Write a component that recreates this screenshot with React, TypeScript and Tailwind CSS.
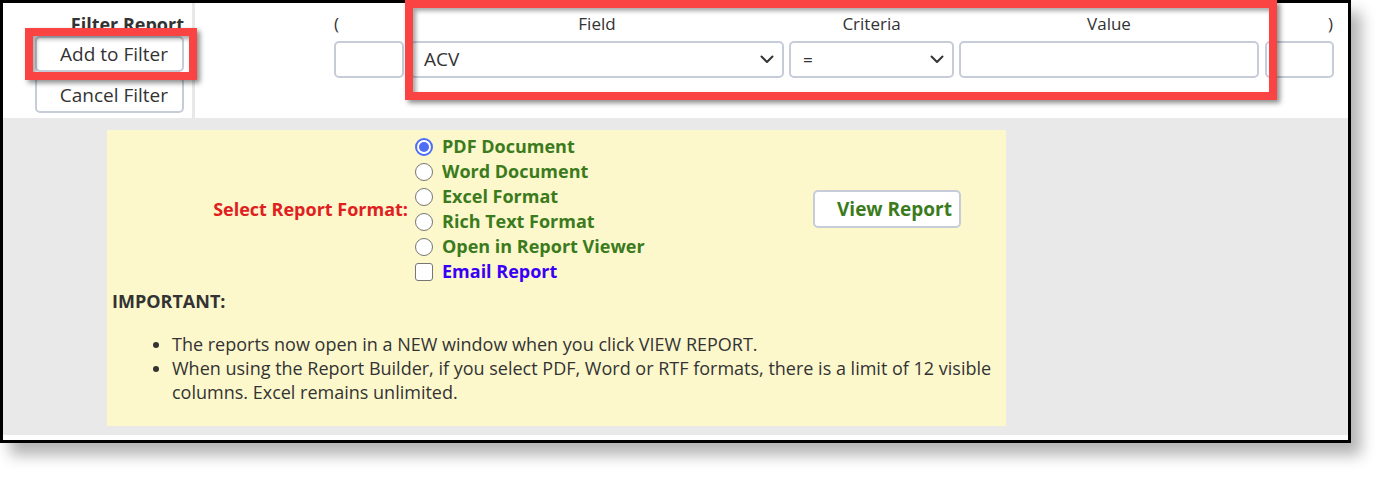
import React from "react";

function Chevron() {
  return (
    <svg width="14" height="9" viewBox="0 0 14 9" className="shrink-0">
      <path d="M1.5 1.5 L7 7 L12.5 1.5" fill="none" stroke="#333" strokeWidth="2" strokeLinecap="round" strokeLinejoin="round" />
    </svg>
  );
}

function Radio({ checked }: { checked?: boolean }) {
  if (checked) {
    return (
      <div className="w-[18px] h-[18px] rounded-full border-[2px] border-[#4d6df5] bg-white flex items-center justify-center shrink-0">
        <div className="w-[10px] h-[10px] rounded-full bg-[#4d6df5]" />
      </div>
    );
  }
  return <div className="w-[18px] h-[18px] rounded-full border-[1.5px] border-[#767676] bg-white shrink-0" />;
}

export default function App() {
  const formats = ["PDF Document", "Word Document", "Excel Format", "Rich Text Format", "Open in Report Viewer"];
  return (
    <div className="relative w-[1394px] h-[486px] bg-white font-['Open_Sans',sans-serif] text-[#333] overflow-hidden">
      <div className="w-[1351px] h-[443px] border-[3px] border-black bg-white flex flex-col shadow-[10px_12px_14px_rgba(0,0,0,0.3)]">
        {/* header */}
        <div className="h-[115px] flex">
          <div className="w-[189px] flex flex-col items-end pr-[8px] pt-[9px]">
            <div className="font-bold text-[18px] leading-[24px]">Filter Report</div>
            <button className="mt-[0px] w-[149px] h-[36px] rounded-[5px] border-[2px] border-[#c6cdd9] bg-white text-right pr-[14px] text-[19px] leading-none">
              Add to Filter
            </button>
            <button className="mt-[5px] w-[149px] h-[36px] rounded-[5px] border-[2px] border-[#c6cdd9] bg-white text-right pr-[14px] text-[19px] leading-none">
              Cancel Filter
            </button>
          </div>
          <div className="w-[3px] bg-[#e8e8e8]" />
          <div className="flex-1 flex pl-[139px] pt-[9px] text-[17px]">
            <div className="w-[70px] flex flex-col">
              <div className="leading-[24px] h-[24px] mb-[5px]">(</div>
              <div className="h-[37px] rounded-[5px] border-[2px] border-[#c6cdd9] bg-white" />
            </div>
            <div className="w-[374px] ml-[6px] flex flex-col">
              <div className="leading-[24px] h-[24px] mb-[5px] text-center">Field</div>
              <div className="h-[37px] rounded-[5px] border-[2px] border-[#c6cdd9] bg-white flex items-center pl-[12px] pr-[8px] justify-between">
                <span className="text-[19px]">ACV</span>
                <Chevron />
              </div>
            </div>
            <div className="w-[165px] ml-[5px] flex flex-col">
              <div className="leading-[24px] h-[24px] mb-[5px] text-center">Criteria</div>
              <div className="h-[37px] rounded-[5px] border-[2px] border-[#c6cdd9] bg-white flex items-center pl-[12px] pr-[8px] justify-between">
                <span className="text-[17px]">=</span>
                <Chevron />
              </div>
            </div>
            <div className="w-[300px] ml-[5px] flex flex-col">
              <div className="leading-[24px] h-[24px] mb-[5px] text-center">Value</div>
              <div className="h-[37px] rounded-[5px] border-[2px] border-[#c6cdd9] bg-white" />
            </div>
            <div className="w-[69px] ml-[6px] flex flex-col">
              <div className="leading-[24px] h-[24px] mb-[5px] text-right pr-[1px]">)</div>
              <div className="h-[37px] rounded-[5px] border-[2px] border-[#c6cdd9] bg-white" />
            </div>
          </div>
        </div>
        {/* grey area */}
        <div className="flex-1 bg-[#e9e9e9] pt-[12px] pl-[104px]">
          <div className="w-[899px] h-[296px] bg-[#fcf8cc] pt-[4px]">
            <div className="flex items-center">
              <div className="w-[301px] text-right font-bold text-[18px] text-[#e0201f]">Select Report Format:</div>
              <div className="ml-[7px] w-[300px] flex flex-col">
                {formats.map((f, i) => (
                  <div key={f} className="h-[25px] flex items-center">
                    <Radio checked={i === 0} />
                    <span className="ml-[9px] font-bold text-[18px] text-[#3b7b1d] leading-[25px]">{f}</span>
                  </div>
                ))}
                <div className="h-[25px] flex items-center">
                  <div className="w-[18px] h-[18px] rounded-[3px] border-[1.5px] border-[#767676] bg-white shrink-0" />
                  <span className="ml-[9px] font-bold text-[18px] text-[#3a00f7] leading-[25px]">Email Report</span>
                </div>
              </div>
              <button className="ml-[98px] w-[148px] h-[38px] rounded-[5px] border-[2px] border-[#c6cdd9] bg-white text-right pr-[7px] font-bold text-[19px] text-[#3b7b1d] leading-none">
                View Report
              </button>
            </div>
            <div className="mt-[5px] pl-[5px] font-bold text-[18px] leading-[24px]">IMPORTANT:</div>
            <ul className="mt-[19px] list-disc pl-[65px] pr-[10px] text-[18px] leading-[24px]">
              <li>The reports now open in a NEW window when you click VIEW REPORT.</li>
              <li>When using the Report Builder, if you select PDF, Word or RTF formats, there is a limit of 12 visible columns. Excel remains unlimited.</li>
            </ul>
          </div>
        </div>
        <div className="h-[5px] bg-white" />
      </div>

      {/* highlight overlays */}
      <div className="absolute left-[25px] top-[28px] w-[172px] h-[52px] border-[8px] border-[#fa4343] shadow-[3px_3px_5px_rgba(0,0,0,0.45),inset_3px_3px_4px_rgba(0,0,0,0.35)]" />
      <div className="absolute left-[405px] top-[0px] w-[872px] h-[100px] border-[8px] border-[#fa4343] shadow-[3px_3px_5px_rgba(0,0,0,0.45),inset_3px_3px_4px_rgba(0,0,0,0.35)]" />
    </div>
  );
}
